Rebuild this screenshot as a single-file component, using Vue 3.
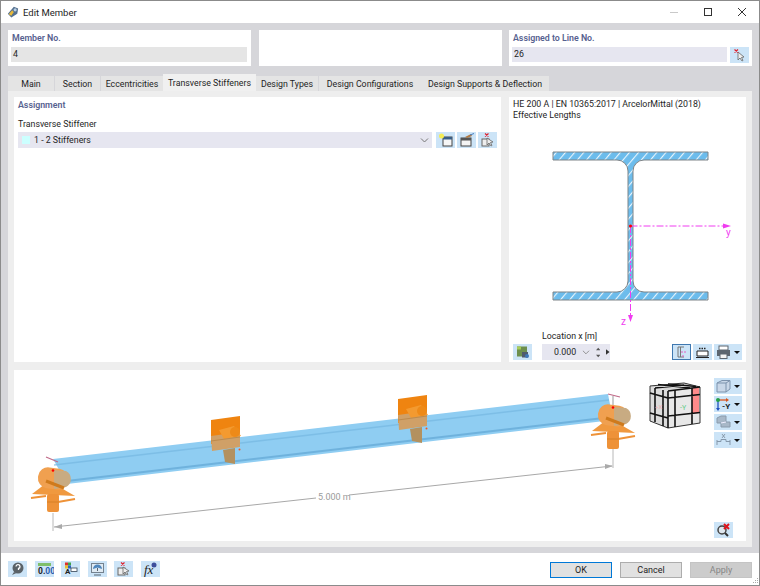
<script setup>
import { ref } from 'vue'

const tabs = [
  'Main',
  'Section',
  'Eccentricities',
  'Transverse Stiffeners',
  'Design Types',
  'Design Configurations',
  'Design Supports & Deflection',
]
const activeTab = ref('Transverse Stiffeners')
</script>

<template>
  <div class="window">
    <header class="titlebar">
      <svg class="titlebar__logo" viewBox="0 0 14 14" width="12" height="12">
        <path d="M1 9 L8 1 L13 3 L12 9 L5 13.500 Z" fill="#54708f" />
        <path d="M2 9.500 L6 5 L8 7 L5 11.500 Z" fill="#e7b93a" />
        <circle cx="9.500" cy="4.500" r="1.800" fill="#b9cfe4" />
      </svg>
      <span class="titlebar__title">Edit Member</span>
      <div class="titlebar__controls">
        <svg viewBox="0 0 10 10" width="10" height="10"><path d="M1 5.500H9" stroke="#c9c9c9" /></svg>
        <svg viewBox="0 0 10 10" width="10" height="10"><rect x="1.500" y="1.500" width="7" height="7" fill="none" stroke="#333" /></svg>
        <svg viewBox="0 0 10 10" width="10" height="10"><path d="M1 1L9 9M9 1L1 9" stroke="#333" /></svg>
      </div>
    </header>

    <main class="body">
      <section class="top">
        <div class="top__panel">
          <div class="label">Member No.</div>
          <div class="field field--disabled">4</div>
        </div>
        <div class="top__panel"></div>
        <div class="top__panel">
          <div class="label">Assigned to Line No.</div>
          <div class="row">
            <div class="field field--grow">26</div>
            <button class="icon-btn">
              <svg viewBox="0 0 19 16" width="19" height="16">
                <path d="M8 5 L8 13 L10 11 L12 14 L13 13.400 L11.500 10.500 L14 10 Z" fill="#eee" stroke="#666" stroke-width=".8" />
                <path d="M4.500 2.500 L8 5.500 M8 2.500 L4.500 5.500" stroke="#e0202c" stroke-width="1.200" />
              </svg>
            </button>
          </div>
        </div>
      </section>

      <nav class="tabs">
        <div
          v-for="tab in tabs"
          :key="tab"
          class="tabs__item"
          :class="{ 'tabs__item--active': tab === activeTab }"
        >
          {{ tab }}
        </div>
      </nav>

      <section class="content">
        <div class="upper">
          <div class="assign">
            <div class="label label--sub">Assignment</div>
            <div class="assign__caption">Transverse Stiffener</div>
            <div class="assign__row">
              <div class="combo">
                <span class="combo__swatch"></span>
                <span>1 - 2 Stiffeners</span>
                <svg class="combo__chevron" viewBox="0 0 9 5" width="9" height="5">
                  <path d="M1 .5L4.500 4L8 .5" fill="none" stroke="#777" />
                </svg>
              </div>
              <button class="icon-btn">
                <svg viewBox="0 0 19 16" width="19" height="16">
                  <rect x="7" y="5" width="9" height="9" fill="#f6f6f6" stroke="#444" />
                  <rect x="7" y="5" width="9" height="2.500" fill="#3a5f86" />
                  <circle cx="5.500" cy="4" r="2.500" fill="#f4ec55" />
                </svg>
              </button>
              <button class="icon-btn">
                <svg viewBox="0 0 19 16" width="19" height="16">
                  <rect x="4" y="6" width="10" height="8" fill="#f4f4f4" stroke="#444" />
                  <rect x="4" y="6" width="10" height="2.500" fill="#555" />
                  <path d="M8 5 L14 2 L15 4 L10 6 Z" fill="#b07a45" />
                  <path d="M13 3 L17 1.500" stroke="#4a7fc0" />
                </svg>
              </button>
              <button class="icon-btn">
                <svg viewBox="0 0 19 16" width="19" height="16">
                  <rect x="4" y="7" width="7" height="7" fill="#eee" stroke="#666" />
                  <path d="M9 6 L9 13 L11 11 L13 14 L14 13.400 L12.500 10.500 L15 10 Z" fill="#eee" stroke="#666" stroke-width=".8" />
                  <path d="M7 1.500 L10.500 4.500 M10.500 1.500 L7 4.500" stroke="#e0202c" stroke-width="1.200" />
                </svg>
              </button>
            </div>
          </div>

          <div class="section">
            <div class="section__text">HE 200 A | EN 10365:2017 | ArcelorMittal (2018)<br />Effective Lengths</div>
            <svg class="section__drawing" viewBox="510 122 236 210" width="236" height="210">
              <defs>
                <pattern id="hatch" width="7" height="7" patternUnits="userSpaceOnUse" patternTransform="rotate(40)">
                  <rect width="7" height="7" fill="#6cbcec" />
                  <rect width="1.100" height="7" fill="#fff" opacity=".85" />
                </pattern>
              </defs>
              <path
                d="M554 153H709V161H645A11 11 0 0 0 634 172V282A11 11 0 0 0 645 293H709V301H554V293H618A11 11 0 0 0 629 282V172A11 11 0 0 0 618 161H554Z"
                fill="url(#hatch)"
                stroke="#7f8487"
                stroke-width="1"
              />
              <path d="M631.500 227H727" stroke="#f03cf0" stroke-dasharray="7 2 2 2" />
              <path d="M732 227L724 224.500V229.500Z" fill="#f03cf0" />
              <path d="M631.500 227V318" stroke="#f03cf0" stroke-dasharray="7 2 2 2" />
              <path d="M631.500 323L629 316H634Z" fill="#f03cf0" />
              <circle cx="631.500" cy="227" r="1.600" fill="#f00" />
              <text x="727" y="237" class="axis">y</text>
              <text x="622" y="326" class="axis">z</text>
            </svg>
            <div class="location">
              <button class="icon-btn">
                <svg viewBox="0 0 19 16" width="19" height="16">
                  <rect x="4" y="2.500" width="10" height="10" fill="#6d8f4e" />
                  <rect x="4" y="2.500" width="4" height="3" fill="#a7cc58" />
                  <rect x="9" y="8" width="6" height="5.500" fill="#4f5b6c" />
                  <circle cx="14" cy="12" r="2" fill="#3f77b8" />
                </svg>
              </button>
              <div class="location__field">
                <div class="location__caption">Location x [m]</div>
                <div class="spin">
                  <span class="spin__value">0.000</span>
                  <svg viewBox="0 0 9 5" width="9" height="5"><path d="M1 .5L4.500 4L8 .5" fill="none" stroke="#888" /></svg>
                  <svg viewBox="0 0 5 11" width="5" height="11">
                    <path d="M2.500 0L5 3H0Z M2.500 11L0 8H5Z" fill="#555" />
                  </svg>
                  <svg viewBox="0 0 4 6" width="4" height="6"><path d="M0 0L4 3L0 6Z" fill="#333" /></svg>
                </div>
              </div>
              <div class="location__tools">
                <button class="icon-btn icon-btn--selected">
                  <svg viewBox="0 0 19 16" width="19" height="16">
                    <path d="M6 3H12M6 3V13H12M8.500 3V13" fill="none" stroke="#777" />
                    <path d="M9 8H14M11 11V14" stroke="#e45ec0" stroke-dasharray="2 1" />
                  </svg>
                </button>
                <button class="icon-btn">
                  <svg viewBox="0 0 19 16" width="19" height="16">
                    <path d="M4 7H15V12H4Z" fill="#fff" stroke="#222" />
                    <path d="M3 13.500H16" stroke="#222" />
                    <path d="M6 4.500H13" stroke="#222" stroke-dasharray="1.500 1" stroke-width="1.500" />
                  </svg>
                </button>
                <button class="icon-btn icon-btn--wide">
                  <svg viewBox="0 0 19 16" width="19" height="16">
                    <rect x="5" y="2" width="9" height="4" fill="#fff" stroke="#5c6670" />
                    <rect x="3" y="6" width="13" height="6" fill="#5c6670" />
                    <rect x="6" y="10" width="7" height="4.500" fill="#f4f4f4" stroke="#5c6670" />
                  </svg>
                  <span class="caret"></span>
                </button>
              </div>
            </div>
          </div>
        </div>

        <div class="viewer">
          <svg class="viewer__scene" viewBox="14 370 732 171" width="732" height="171">
            <defs>
              <g id="stiffener">
                <path d="M211 420L240 416V440L211 444Z" fill="#ef8410" />
                <path d="M211 436L240 432V447L212 451Z" fill="#d0a067" />
                <path d="M223 450L235 448V464L225 462Z" fill="#b3915f" />
                <path d="M219 430L234 426L241 436L224 439Z" fill="#f39a30" />
                <circle cx="235" cy="432" r="5" fill="#ee8a18" />
                <path d="M211 441L240 437" stroke="#bd8a4c" />
                <circle cx="239.500" cy="449.500" r="1" fill="#f4581c" />
              </g>
              <g id="support">
                <path d="M49 481L75 496L32 494Z" fill="#f0993f" />
                <rect x="38" y="468" width="30" height="21" rx="10" fill="#f0a050" transform="rotate(8 53 478)" />
                <path d="M54 470L66 471A9 9 0 0 1 66 487L54 489Z" fill="#c8ab82" />
                <path d="M46 481L64 488" stroke="#cf7a1c" stroke-width="3" />
                <path d="M31 498L46 496M58 502L75 499" stroke="#ee9238" stroke-width="2" />
                <rect x="47" y="494" width="12" height="18" rx="2" fill="#ee9238" />
                <path d="M47 502H59" stroke="#cc7a20" opacity=".7" />
              </g>
            </defs>

            <path d="M53 459L608 394L613 420L67 484Z" fill="#8fcdf2" />
            <path d="M54 465L609 400" stroke="#76b8e2" stroke-width="1.500" opacity=".7" />
            <path d="M67 481L612 417" stroke="#6aaeda" stroke-width="2" opacity=".85" />
            <path d="M46 457L58 462M608 394L620 397" stroke="#c06a88" stroke-width="1.200" />
            <path d="M613 396V412" stroke="#999" />

            <use href="#stiffener" />
            <use href="#stiffener" transform="translate(187 -21)" />
            <use href="#support" />
            <use href="#support" transform="translate(560 -63)" />
            <circle cx="53" cy="470.500" r="1.300" fill="#f00" />
            <circle cx="613" cy="407.500" r="1.300" fill="#f00" />

            <path d="M53 513V531M613 449V468" stroke="#b8b8b8" />
            <path d="M54 527L316 498M349 495L612 466" stroke="#a8a8a8" />
            <path d="M54 527L62 524V529Z M613 466L605 464V469Z" fill="#aaa" />
            <text x="318" y="500" class="dim">5.000 m</text>

            <g class="cube">
              <path d="M650 386L684 383L700 387L668 391Z" fill="#d6d6d6" />
              <path d="M650 386L668 391V428L650 421Z" fill="#dcdcdc" />
              <path d="M668 391L700 387V423L668 428Z" fill="#e8e8e8" />
              <path d="M692 388.500L699 387.500V413L692 414Z" fill="#ff8a8a" />
              <path d="M650 386L684 383L700 387V423L668 428L650 421Z" fill="none" stroke="#333" stroke-width="1" />
              <path d="M668 391L700 387M668 391V428" stroke="#111" stroke-width="1.600" fill="none" />
              <path d="M675 390V427M692 388V424M668 398L700 394.500M668 416L700 412.500" stroke="#111" stroke-width="1.600" fill="none" />
              <path d="M655 388V422M663 390V426M650 393L668 398M650 413L668 418" stroke="#111" stroke-width="1.600" fill="none" />
              <path d="M658 384.500L690 388M668 383.800L696 386.500M655 388L684 385" stroke="#111" stroke-width="1.300" fill="none" />
              <text x="680" y="410" class="cube__y">-Y</text>
              <text x="655" y="409" class="cube__x">+X</text>
            </g>
          </svg>

          <div class="viewer__tools">
            <button class="icon-btn icon-btn--wide">
              <svg viewBox="0 0 19 16" width="19" height="16">
                <path d="M3 5L8 2.500H16V11L12 14H3Z" fill="#c9d7e8" stroke="#7d93ad" />
                <path d="M3 5H12V14M12 5L16 2.500" fill="none" stroke="#7d93ad" />
              </svg>
              <span class="caret"></span>
            </button>
            <button class="icon-btn icon-btn--wide">
              <svg viewBox="0 0 19 16" width="19" height="16">
                <path d="M4 4H13" stroke="#d9541e" stroke-width="1.300" />
                <path d="M4 4V13" stroke="#2050c0" stroke-width="1.300" />
                <circle cx="4" cy="4" r="2" fill="#24a04a" />
                <path d="M15 4L12 2V6Z" fill="#d9541e" />
                <path d="M4 15L2 12H6Z" fill="#2050c0" />
                <text x="8" y="13" class="tool-y">-Y</text>
              </svg>
              <span class="caret"></span>
            </button>
            <button class="icon-btn icon-btn--wide">
              <svg viewBox="0 0 19 16" width="19" height="16">
                <path d="M3 4L7 2H12V8H16V13H7V9H3Z" fill="#a8b8c8" stroke="#8a9bac" />
                <path d="M7 9L12 8" stroke="#eef" />
              </svg>
              <span class="caret"></span>
            </button>
            <button class="icon-btn icon-btn--wide">
              <svg viewBox="0 0 19 16" width="19" height="16">
                <path d="M3 8V13M16 8V13M3 9.500H7V7.500H12V9.500H16" fill="none" stroke="#8598ab" />
                <path d="M8 2L11 6M11 2L8 6" stroke="#7a8a9a" stroke-width=".8" />
              </svg>
              <span class="caret"></span>
            </button>
          </div>

          <button class="icon-btn viewer__reset">
            <svg viewBox="0 0 19 16" width="19" height="16">
              <circle cx="8" cy="8" r="4" fill="#dfe7ee" stroke="#444" stroke-width="1.500" />
              <path d="M11 11L14 14" stroke="#333" stroke-width="2" />
              <path d="M10 2L15 7M15 2L10 7" stroke="#e0141c" stroke-width="2" />
            </svg>
          </button>
        </div>
      </section>
    </main>

    <footer class="footer">
      <div class="footer__icons">
        <button class="icon-btn">
          <svg viewBox="0 0 19 16" width="19" height="16">
            <circle cx="10" cy="7" r="5.500" fill="#5a6268" />
            <path d="M6 11L4 14L8.500 12Z" fill="#5a6268" />
            <path d="M8 5.500A2 2 0 1 1 10.500 7.500V9" fill="none" stroke="#fff" stroke-width="1.300" />
          </svg>
        </button>
        <button class="icon-btn">
          <svg viewBox="0 0 19 16" width="19" height="16">
            <rect x="3" y="2" width="13" height="3" fill="#7fbf6a" />
            <text x="3" y="13" class="num"><tspan fill="#222">0.</tspan><tspan fill="#2a5fb0">00</tspan></text>
          </svg>
        </button>
        <button class="icon-btn">
          <svg viewBox="0 0 19 16" width="19" height="16">
            <rect x="4" y="1.500" width="3" height="3" fill="#e0302c" />
            <rect x="7" y="1.500" width="3" height="3" fill="#3fa44a" />
            <rect x="4" y="4.500" width="3" height="3" fill="#e6c02c" />
            <rect x="7" y="4.500" width="3" height="3" fill="#2f62c0" />
            <rect x="10" y="7" width="6" height="3.500" fill="#fff" stroke="#345" stroke-width=".8" />
            <text x="4" y="13" class="letter">A</text>
          </svg>
        </button>
        <button class="icon-btn">
          <svg viewBox="0 0 19 16" width="19" height="16">
            <rect x="3.500" y="2.500" width="12" height="9" fill="#dfeaf3" stroke="#74828f" />
            <path d="M5 8A4.500 4.500 0 0 1 14 8L9.500 6.500Z" fill="#4f87bd" />
            <path d="M9.500 7V10M6 14H13" stroke="#55626f" />
          </svg>
        </button>
        <button class="icon-btn">
          <svg viewBox="0 0 19 16" width="19" height="16">
            <rect x="4" y="7" width="7" height="7" fill="#eee" stroke="#666" />
            <path d="M9 6V13L11 11L13 14L14 13.400L12.500 10.500L15 10Z" fill="#eee" stroke="#666" stroke-width=".8" />
            <path d="M7 1.500L10.500 4.500M10.500 1.500L7 4.500" stroke="#e0202c" stroke-width="1.200" />
          </svg>
        </button>
        <button class="icon-btn">
          <svg viewBox="0 0 19 16" width="19" height="16">
            <text x="3" y="13" class="fx">fx</text>
            <circle cx="13" cy="4" r="2.500" fill="#3d4f9c" />
          </svg>
        </button>
      </div>
      <div class="footer__actions">
        <button class="btn btn--default">OK</button>
        <button class="btn">Cancel</button>
        <button class="btn btn--disabled">Apply</button>
      </div>
      <svg class="footer__grip" viewBox="0 0 8 8" width="8" height="8">
        <path d="M6 1h1v1H6zM4 3h1v1H4zM6 3h1v1H6zM2 5h1v1H2zM4 5h1v1H4zM6 5h1v1H6z" fill="#a8a8a8" />
      </svg>
    </footer>
  </div>
</template>

<style>
html,
body {
  margin: 0;
  padding: 0;
}
</style>

<style scoped>
/* window frame */
.window {
  position: relative;
  display: flex;
  flex-direction: column;
  box-sizing: border-box;
  width: 760px;
  height: 586px;
  border: 1px solid #8b8b8b;
  background: #d6d6da;
  color: #1e1e1e;
  font-family: Roboto, "Noto Sans", sans-serif;
  font-size: 8.800px;
  overflow: hidden;
}

button {
  font-family: inherit;
  padding: 0;
}

.titlebar {
  display: flex;
  align-items: center;
  flex: 0 0 22px;
  padding: 0 6px;
  gap: 4px;
  background: #fff;
}

.titlebar__title {
  font-size: 9.500px;
}

.titlebar__controls {
  display: flex;
  gap: 24px;
  margin-left: auto;
  margin-right: 6px;
}

/* main area */
.body {
  display: flex;
  flex-direction: column;
  flex: 1;
  padding: 7px 7px 6px;
}

.top {
  display: grid;
  grid-template-columns: repeat(3, 243px);
  justify-content: space-between;
  height: 36px;
}

.top__panel {
  box-sizing: border-box;
  padding: 1px 3px;
  background: #fff;
}

.label {
  height: 16px;
  line-height: 14px;
  color: #56618f;
  font-weight: 600;
  padding-left: 1px;
}

.label--sub {
  height: 20px;
  line-height: 14px;
  padding-left: 0;
}

.row {
  display: flex;
  gap: 3px;
}

.field {
  box-sizing: border-box;
  height: 15px;
  line-height: 15px;
  padding-left: 2px;
  background: #e6e6f0;
}

.field--disabled {
  width: 236px;
  background: #e5e5e5;
}

.field--grow {
  flex: 1;
}

/* tabs */
.tabs {
  display: flex;
  align-items: flex-end;
  gap: 1px;
  height: 17px;
  margin-top: 8px;
}

.tabs__item {
  display: flex;
  align-items: center;
  justify-content: center;
  box-sizing: border-box;
  height: 15px;
  background: #e4e4e4;
  white-space: nowrap;
}

.tabs__item--active {
  height: 17px;
  background: #f0f0f0;
}

.tabs__item:first-child {
  width: 46px;
}

.tabs__item:nth-child(2) {
  width: 45px;
}

.tabs__item:nth-child(3) {
  width: 62px;
  margin-right: -1px;
}

.tabs__item:nth-child(4) {
  width: 93px;
  margin-right: -1px;
}

.tabs__item:nth-child(5) {
  width: 62px;
}

.tabs__item:nth-child(6) {
  width: 102px;
  margin-right: -1px;
}

.tabs__item:nth-child(7) {
  width: 128px;
}

.content {
  display: flex;
  flex-direction: column;
  flex: 1;
  gap: 8px;
  padding: 6px;
  background: #eeeeee;
}

.upper {
  display: flex;
  gap: 8px;
  height: 265px;
}

/* assignment panel */
.assign {
  display: flex;
  flex-direction: column;
  box-sizing: border-box;
  width: 487px;
  padding: 1px 4px;
  background: #fff;
}

.assign__caption {
  height: 14px;
  line-height: 12px;
}

.assign__row {
  display: flex;
  gap: 2px;
}

.combo {
  display: flex;
  align-items: center;
  gap: 4px;
  box-sizing: border-box;
  width: 414px;
  height: 16px;
  margin-right: 2px;
  padding: 0 3px 0 4px;
  background: #e6e6f0;
}

.combo__swatch {
  width: 8px;
  height: 8px;
  background: #ccffff;
}

.combo__chevron {
  margin-left: auto;
}

.icon-btn {
  display: flex;
  align-items: center;
  flex: none;
  box-sizing: border-box;
  width: 19px;
  height: 16px;
  border: none;
  background: #cce4f7;
}

.icon-btn--wide {
  width: 28px;
}

.icon-btn--selected {
  outline: 1px solid #3f78b0;
  outline-offset: -1px;
}

.caret {
  width: 0;
  height: 0;
  margin-left: 1px;
  border-top: 3px solid #111;
  border-left: 3px solid transparent;
  border-right: 3px solid transparent;
}

/* section panel */
.section {
  display: flex;
  flex-direction: column;
  box-sizing: border-box;
  width: 237px;
  padding: 2px 4px 3px;
  background: #fff;
}

.section__text {
  height: 23px;
  line-height: 11px;
}

.section__drawing {
  display: block;
  margin-left: -4px;
  flex: none;
}

.axis {
  fill: #f03cf0;
  font-size: 10px;
}

.location {
  display: flex;
  align-items: flex-end;
  margin-top: auto;
}

.location__field {
  margin-left: 10px;
}

.location__caption {
  height: 13px;
  line-height: 11px;
}

.spin {
  display: flex;
  align-items: center;
  gap: 6px;
  box-sizing: border-box;
  width: 68px;
  height: 16px;
  padding-left: 12px;
  background: #e6e6f0;
}

.location__tools {
  display: flex;
  gap: 2px;
  margin-left: auto;
}

/* 3d viewer */
.viewer {
  position: relative;
  height: 171px;
  background: #fff;
}

.viewer__scene {
  display: block;
}

.viewer__tools {
  position: absolute;
  top: 8px;
  right: 4px;
  display: flex;
  flex-direction: column;
  gap: 2px;
}

.viewer__reset {
  position: absolute;
  right: 13px;
  bottom: 3px;
}

.dim {
  fill: #9a9a9a;
  font-size: 9px;
}

.cube__y {
  fill: #66cc88;
  font-size: 7px;
}

.cube__x {
  fill: #eeb0b0;
  font-size: 6px;
}

.tool-y {
  fill: #222;
  font-size: 8px;
  font-weight: 700;
}

.num {
  font-size: 8.500px;
  font-weight: 700;
}

.letter {
  fill: #222;
  font-size: 8px;
  font-weight: 700;
}

.fx {
  fill: #222;
  font-family: "Liberation Serif", serif;
  font-size: 13px;
  font-style: italic;
}

/* footer */
.footer {
  display: flex;
  align-items: center;
  flex: 0 0 32px;
  box-sizing: border-box;
  padding: 0 7px;
  background: #fff;
}

.footer__icons {
  display: flex;
  gap: 7.500px;
}

.footer__actions {
  display: flex;
  gap: 8px;
  margin-top: 1px;
  margin-left: auto;
}

.btn {
  box-sizing: border-box;
  width: 62px;
  height: 16px;
  border: 1px solid #adadad;
  background: #e1e1e1;
  color: #1e1e1e;
  font-size: 9px;
}

.btn--default {
  border: 1px solid #0078d7;
}

.btn--disabled {
  border-color: #c4c4c4;
  background: #cccccc;
  color: #868686;
}

.footer__grip {
  position: absolute;
  right: 0;
  bottom: 0;
}
</style>
